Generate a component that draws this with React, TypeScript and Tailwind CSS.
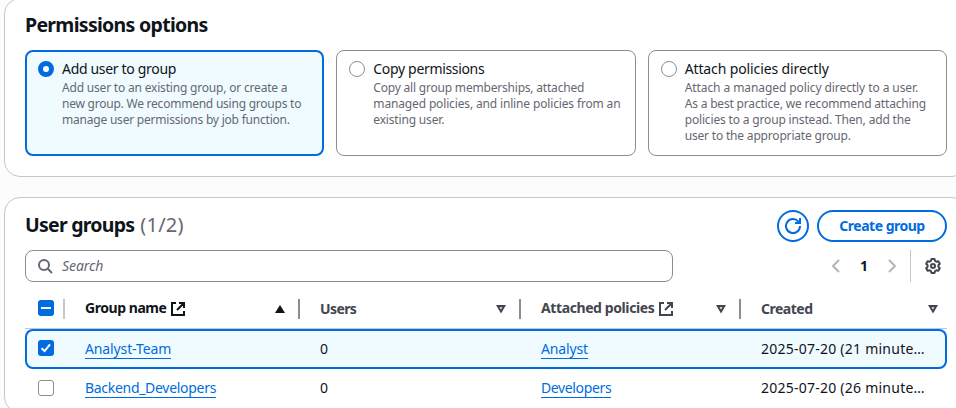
import type { ReactNode } from 'react';

const options = [
  {
    title: 'Add user to group',
    titleClass: 'tracking-[-0.32px]',
    lines: [
      { text: 'Add user to an existing group, or create a', spacing: 'tracking-[-0.19px]' },
      { text: 'new group. We recommend using groups to', spacing: 'tracking-[-0.23px]' },
      { text: 'manage user permissions by job function.', spacing: 'tracking-[-0.21px]' },
    ],
    selected: true,
  },
  {
    title: 'Copy permissions',
    titleClass: 'tracking-[-0.33px]',
    lines: [
      { text: 'Copy all group memberships, attached', spacing: 'tracking-[-0.2px]' },
      { text: 'managed policies, and inline policies from an', spacing: 'tracking-[-0.15px]' },
      { text: 'existing user.', spacing: 'tracking-[-0.17px]' },
    ],
    selected: false,
  },
  {
    title: 'Attach policies directly',
    titleClass: 'tracking-[-0.12px]',
    lines: [
      { text: 'Attach a managed policy directly to a user.', spacing: 'tracking-[-0.08px]' },
      { text: 'As a best practice, we recommend attaching', spacing: 'tracking-[-0.18px]' },
      { text: 'policies to a group instead. Then, add the', spacing: 'tracking-[-0.16px]' },
      { text: 'user to the appropriate group.', spacing: 'tracking-[-0.18px]' },
    ],
    selected: false,
  },
];

const groups = [
  {
    name: 'Analyst-Team',
    nameClass: 'tracking-[-0.12px]',
    users: '0',
    policy: 'Analyst',
    policyClass: 'tracking-[-0.15px]',
    created: '2025-07-20 (21 minute…',
    selected: true,
  },
  {
    name: 'Backend_Developers',
    nameClass: 'tracking-[-0.3px]',
    users: '0',
    policy: 'Developers',
    policyClass: 'tracking-[-0.37px]',
    created: '2025-07-20 (26 minute…',
    selected: false,
  },
];

function Radio({ checked }: { checked: boolean }) {
  return checked ? (
    <span className="h-4 w-4 shrink-0 rounded-full border-[5px] border-[#006ce0] bg-white" />
  ) : (
    <span className="h-4 w-4 shrink-0 rounded-full border border-[#8c8c94] bg-white" />
  );
}

function Checkbox({ state }: { state: 'on' | 'off' | 'mixed' }) {
  if (state === 'off') return <span className="block h-4 w-4 rounded-[3px] border border-[#8c8c94] bg-white" />;
  return (
    <span className="block h-4 w-4 rounded-[3px] bg-[#006ce0]">
      <svg viewBox="0 0 16 16" className="block h-4 w-4" fill="none" stroke="white" strokeWidth="2">
        {state === 'on' ? <path d="M3.5 8.2 6.6 11.1 12 4.4" /> : <path d="M3 8h10" />}
      </svg>
    </span>
  );
}

function External() {
  return (
    <svg viewBox="0 0 16 16" className="ml-1 h-4 w-4 shrink-0" fill="none" stroke="currentColor" strokeWidth="2">
      <path d="M6 2H2v12h12v-4M9 2h5v5M14 2 7 9" />
    </svg>
  );
}

function Sort({ active }: { active?: boolean }) {
  return (
    <svg viewBox="0 0 16 16" className="h-4 w-4" fill="currentColor" fillRule="evenodd">
      {active ? <path d="M8 4 3 12h10z" /> : <path d="M3 4h10L8 12.4zM6.6 6.200h2.800L8 8.500z" />}
    </svg>
  );
}

function HeaderCell({
  children,
  spacing,
  external,
  active,
  last,
}: {
  children: ReactNode;
  spacing: string;
  external?: boolean;
  active?: boolean;
  last?: boolean;
}) {
  return (
    <div className={`flex h-5 items-center pl-5 ${last ? 'pr-[6px]' : 'border-r-2 border-[#8c8c94] pr-[10px]'} ${active ? 'text-[#0f141a]' : 'text-[#424650]'}`}>
      <span className={`whitespace-nowrap font-bold ${spacing} ${external ? '-mt-[2px]' : ''}`}>{children}</span>
      {external && <External />}
      <span className="ml-auto">
        <Sort active={active} />
      </span>
    </div>
  );
}

function GroupLink({ children, spacing }: { children: ReactNode; spacing: string }) {
  return <a className={`inline-block h-5 whitespace-nowrap border-b border-[#006ce0] leading-5 text-[#006ce0] ${spacing}`}>{children}</a>;
}

export default function App() {
  return (
    <div className="h-[408px] w-[956px] overflow-hidden bg-[#fcfcfd] pl-1 font-['Noto_Sans','Open_Sans',sans-serif] text-[14px] leading-5 text-[#0f141a]">
      <section className="-mt-[2px] h-[179px] w-[964px] rounded-2xl border border-[#c6c6cd] bg-white px-5 pt-[15px]">
        <h2 className="h-6 text-[19.5px] font-bold leading-[22px] tracking-[-0.7px]">Permissions options</h2>
        <div className="mt-3 grid h-[106px] grid-cols-3 gap-3">
          {options.map((o) => (
            <div
              key={o.title}
              className={`flex gap-2 rounded-lg ${o.selected ? 'border-2 border-[#006ce0] bg-[#f0fbff] px-[11px] pt-[9px]' : 'border border-[#8c8c94] px-3 pt-[10px]'}`}
            >
              <Radio checked={o.selected} />
              <div className="-mt-[2px] whitespace-nowrap">
                <div className={o.titleClass}>{o.title}</div>
                <div className="mt-px text-[12px] leading-4 text-[#656871]">
                  {o.lines.map((l) => (
                    <div key={l.text} className={l.spacing}>
                      {l.text}
                    </div>
                  ))}
                </div>
              </div>
            </div>
          ))}
        </div>
      </section>

      <section className="mt-5 h-[216px] w-[964px] rounded-2xl border border-[#c6c6cd] bg-white px-5 pt-3">
        <div className="flex h-8 items-center">
          <h2 className="-mt-[2px] flex items-baseline gap-[6px] text-[19.5px] font-bold leading-6 tracking-[-0.75px]">
            User groups <span className="text-[20px] font-normal tracking-[0.2px] text-[#656871]">(1/2)</span>
          </h2>
          <button className="ml-auto flex h-8 w-8 items-center justify-center rounded-full border-2 border-[#006ce0] text-[#006ce0]">
            <svg viewBox="0 0 16 16" className="h-4 w-4" fill="none" stroke="currentColor" strokeWidth="2">
              <path d="M15 8A7 7 0 1 1 13.400 3.600L14.600 5M10 5h5V0" />
            </svg>
          </button>
          <button className="ml-2 h-8 w-[130px] whitespace-nowrap rounded-full border-2 border-[#006ce0] text-[14px] font-bold leading-7 tracking-[-0.5px] text-[#006ce0]">
            Create group
          </button>
        </div>
        <div className="mt-2 flex h-8 items-center">
          <div className="flex h-8 w-[648px] items-center rounded-lg border border-[#8c8c94] pl-[11px]">
            <svg viewBox="0 0 16 16" className="h-4 w-4 text-[#656871]" fill="none" stroke="currentColor" strokeWidth="2">
              <circle cx="7" cy="7" r="5" />
              <path d="m10.5 10.5 4.5 4.5" />
            </svg>
            <span className="ml-[9px] italic tracking-[-0.08px] text-[#656871]">Search</span>
          </div>
          <svg viewBox="0 0 16 16" className="ml-[155px] h-4 w-4 text-[#b4b4bb]" fill="none" stroke="currentColor" strokeWidth="2">
            <path d="M11 2 5 8l6 6" />
          </svg>
          <span className="w-10 text-center font-bold">1</span>
          <svg viewBox="0 0 16 16" className="h-4 w-4 text-[#b4b4bb]" fill="none" stroke="currentColor" strokeWidth="2">
            <path d="m5 2 6 6-6 6" />
          </svg>
          <span className="ml-[10px] h-8 w-px bg-[#c6c6cd]" />
          <svg viewBox="0 0 16 16" className="ml-[14px] h-4 w-4 text-[#424650]" fill="none" stroke="currentColor" strokeWidth="2" strokeLinejoin="round">
            <path d="M6.5 1h3l.6 2 1.2.7 2-.5 1.5 2.6L13.4 7.3v1.4l1.4 1.5-1.5 2.6-2-.5-1.2.7-.6 2h-3l-.6-2-1.2-.7-2 .5-1.5-2.6 1.4-1.5V7.3L1.200 5.800l1.500-2.600 2 .5L5.900 3z" />
            <circle cx="8" cy="8" r="2" />
          </svg>
        </div>

        <div className="mt-[17px] grid h-[30px] grid-cols-[40px_235px_221px_220px_206px] border-b border-[#c6c6cd]">
          <div className="flex h-5 items-center border-r-2 border-[#c6c6cd] pl-[13px]">
            <span className="-mt-[2px]">
              <Checkbox state="mixed" />
            </span>
          </div>
          <HeaderCell external active spacing="tracking-[-0.45px]">
            Group name
          </HeaderCell>
          <HeaderCell spacing="tracking-[-0.6px]">Users</HeaderCell>
          <HeaderCell external spacing="tracking-[-0.4px]">
            Attached policies
          </HeaderCell>
          <HeaderCell last spacing="tracking-[-0.5px]">
            Created
          </HeaderCell>
        </div>
        {groups.map((g) => (
          <div
            key={g.name}
            className={`grid h-10 grid-cols-[40px_235px_221px_220px_206px] ${g.selected ? 'rounded-lg bg-[#f0fbff] shadow-[inset_0_0_0_2px_#006ce0]' : ''}`}
          >
            <div className="pl-[13px] pt-[11px]">
              <Checkbox state={g.selected ? 'on' : 'off'} />
            </div>
            <div className={`pl-5 ${g.selected ? 'pt-[10px]' : 'pt-[9px]'}`}>
              <GroupLink spacing={g.nameClass}>{g.name}</GroupLink>
            </div>
            <div className={`pl-5 ${g.selected ? 'pt-[10px]' : 'pt-[9px]'}`}>{g.users}</div>
            <div className={`pl-5 ${g.selected ? 'pt-[10px]' : 'pt-[9px]'}`}>
              <GroupLink spacing={g.policyClass}>{g.policy}</GroupLink>
            </div>
            <div className={`whitespace-nowrap pl-5 tracking-[0.24px] ${g.selected ? 'pt-[10px]' : 'pt-[9px]'}`}>{g.created}</div>
          </div>
        ))}
      </section>
    </div>
  );
}
